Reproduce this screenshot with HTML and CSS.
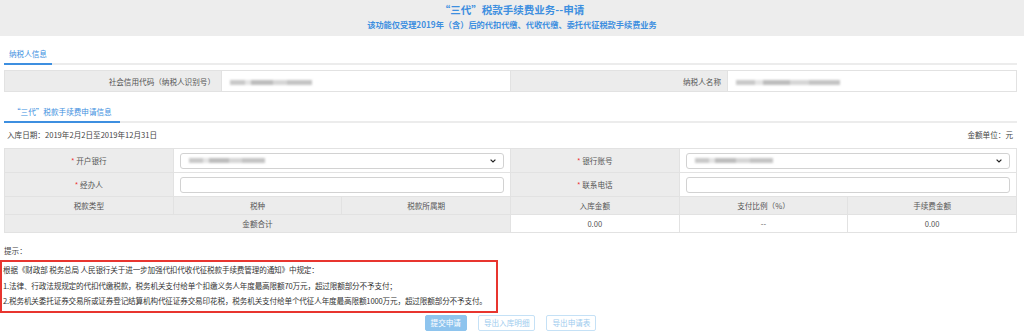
FILE: index.html
```html
<!DOCTYPE html>
<html>
<head>
  <meta charset="utf-8">
  <title>“三代”税款手续费业务--申请</title>
  <link rel="stylesheet" href="styles.css">
</head>
<body>
  <div class="header">
    <h1>“三代”税款手续费业务--申请</h1>
    <p>该功能仅受理2019年（含）后的代扣代缴、代收代缴、委托代征税款手续费业务</p>
  </div>

  <div class="main">
    <div class="tabs first"><span class="tab">纳税人信息</span></div>
    <table class="info">
      <tr>
        <td class="lbl">社会信用代码（纳税人识别号）</td>
        <td class="val"><span class="blur w1"></span></td>
        <td class="lbl">纳税人名称</td>
        <td class="val"><span class="blur w2"></span></td>
      </tr>
    </table>

    <div class="tabs second"><span class="tab">“三代”税款手续费申请信息</span></div>
    <div class="dateline">
      <span>入库日期：2019年2月2日至2019年12月31日</span>
      <span>金额单位：元</span>
    </div>

    <table class="form">
      <colgroup>
        <col><col><col><col><col><col>
      </colgroup>
      <tr class="inrow">
        <td class="lbl"><i>*</i> 开户银行</td>
        <td class="cell" colspan="2">
          <div class="box sel"><span class="blur w3"></span>
            <svg width="6" height="4" viewBox="0 0 6 4"><path d="M0.6 0.6 L3 3 L5.4 0.6" fill="none" stroke="#222" stroke-width="1.2"/></svg>
          </div>
        </td>
        <td class="lbl"><i>*</i> 银行账号</td>
        <td class="cell" colspan="2">
          <div class="box sel"><span class="blur w4"></span>
            <svg width="6" height="4" viewBox="0 0 6 4"><path d="M0.6 0.6 L3 3 L5.4 0.6" fill="none" stroke="#222" stroke-width="1.2"/></svg>
          </div>
        </td>
      </tr>
      <tr class="inrow">
        <td class="lbl"><i>*</i> 经办人</td>
        <td class="cell" colspan="2"><div class="box"></div></td>
        <td class="lbl"><i>*</i> 联系电话</td>
        <td class="cell" colspan="2"><div class="box"></div></td>
      </tr>
      <tr class="head">
        <td>税款类型</td>
        <td>税种</td>
        <td>税款所属期</td>
        <td>入库金额</td>
        <td>支付比例（%）</td>
        <td>手续费金额</td>
      </tr>
      <tr class="total">
        <td class="lbl" colspan="3">金额合计</td>
        <td>0.00</td>
        <td>--</td>
        <td>0.00</td>
      </tr>
    </table>

    <div class="tip">提示：</div>
    <div class="notice">
      <p>根据《财政部 税务总局 人民银行关于进一步加强代扣代收代征税款手续费管理的通知》中规定：</p>
      <p>1.法律、行政法规规定的代扣代缴税款，税务机关支付给单个扣缴义务人年度最高限额70万元，超过限额部分不予支付；</p>
      <p>2.税务机关委托证券交易所或证券登记结算机构代征证券交易印花税，税务机关支付给单个代征人年度最高限额1000万元，超过限额部分不予支付。</p>
    </div>

    <div class="buttons">
      <button class="btn primary">提交申请</button>
      <button class="btn">导出入库明细</button>
      <button class="btn">导出申请表</button>
    </div>
  </div>
</body>
</html>
```

FILE: styles.css
```css
body {
  margin: 0;
  background: #fff;
  color: #444;
  font-family: "Noto Sans CJK SC", "Liberation Sans", sans-serif;
  font-size: 7.6px;
}

/* page title band */
.header {
  height: 36px;
  background: #ededed;
  text-align: center;
  color: #3d8fe0;
}
.header h1 {
  margin: 0;
  padding-top: 3px;
  font-size: 10.5px;
  line-height: 13px;
  font-weight: bold;
}
.header p {
  margin: 3px 0 0;
  font-size: 8.2px;
  line-height: 10px;
  font-weight: bold;
}

.main {
  padding: 0 7px 0 4px;
}

/* tab bars */
.tabs {
  border-bottom: 2px solid #ececec;
  height: 17px;
}
.tabs.first { margin-top: 10px; }
.tabs.second { margin-top: 12px; }
.tab {
  display: inline-block;
  height: 17px;
  line-height: 16px;
  padding: 0 5px;
  color: #3d8fe0;
  border-bottom: 2px solid #3d8fe0;
}
.tabs.second .tab { padding: 0 8px 0 9px; }

/* tables */
table {
  width: 100%;
  border-collapse: collapse;
  table-layout: fixed;
}
td {
  border: 1px solid #e2e2e2;
  padding: 0;
  text-align: center;
  color: #555;
}
td.lbl { background: #ececec; }

.info { margin-top: 5px; }
.info td { height: 20px; }
.info td:nth-child(1), .info td:nth-child(3) { width: 210px; }
.info td.lbl { text-align: right; padding-right: 6px; }
.info td.val { text-align: left; padding-left: 8px; }

.blur {
  display: inline-block;
  height: 5px;
  vertical-align: middle;
  background: linear-gradient(90deg, #c9c9c9 0 18%, #e4e4e4 18% 26%, #bdbdbd 26% 52%, #d6d6d6 52% 70%, #c4c4c4 70% 100%);
  filter: blur(1.3px);
}
.w1 { width: 82px; }
.w2 { width: 104px; }
.w3 { width: 76px; }
.w4 { width: 78px; }

.dateline {
  display: flex;
  justify-content: space-between;
  padding: 6px 4px 0 3px;
  line-height: 12px;
  margin-bottom: 7px;
}

.form tr.inrow td { height: 23px; }
.form td.cell { background: #fff; padding: 0 6px; }
.form i {
  color: #e33;
  font-style: normal;
}
.box {
  height: 16px;
  border: 1px solid #d2d2d2;
  border-radius: 3px;
  background: #fff;
  box-sizing: border-box;
}
.sel {
  display: flex;
  align-items: center;
  justify-content: space-between;
  padding: 0 7px 0 8px;
}
.form tr.head td {
  height: 17px;
  background: #ececec;
}
.form tr.total td { height: 17px; }

.tip {
  margin-top: 12px;
  line-height: 12px;
}

.notice {
  margin: 3px 0 0 -4px;
  width: 493px;
  border: 2px solid #e8352f;
  padding: 0 0 2px 1px;
}
.notice p {
  margin: 0;
  line-height: 15.5px;
  color: #333;
  white-space: nowrap;
  letter-spacing: -0.15px;
}

.buttons {
  display: flex;
  justify-content: center;
  gap: 11px;
  margin-top: 2px;
}
.btn {
  height: 16px;
  padding: 0 5px;
  font-family: inherit;
  font-size: 7.6px;
  border: 1px solid #c5e1f6;
  border-radius: 2px;
  background: #fff;
  color: #9dcbee;
}
.btn.primary {
  background: #8ec4ee;
  border-color: #8ec4ee;
  color: #fff;
}
```
